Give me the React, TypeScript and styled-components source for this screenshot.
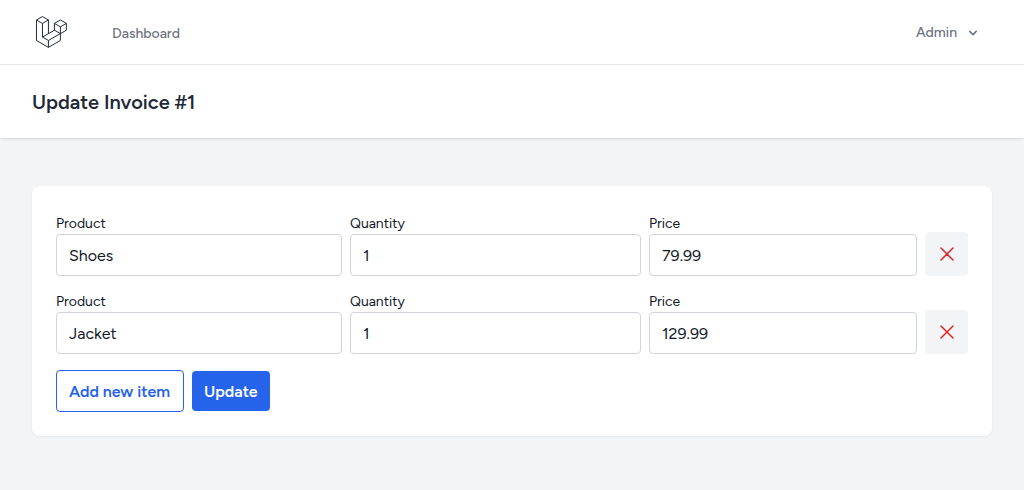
import React, { useState } from "react";
import styled, { createGlobalStyle, css } from "styled-components";

const GlobalStyle = createGlobalStyle`
  *, *::before, *::after { box-sizing: border-box; }
  body {
    margin: 0;
    background: #f3f4f6;
    color: #111827;
    font-family: Figtree, Inter, "Liberation Sans", sans-serif;
    font-size: 16px;
    line-height: 24px;
    -webkit-font-smoothing: antialiased;
  }
  button, input { font: inherit; color: inherit; }
`;

const Page = styled.div`
  min-height: 100vh;
  background: #f3f4f6;
`;

const Nav = styled.nav`
  background: #fff;
  border-bottom: 1px solid #e9ebee;
`;

const Container = styled.div`
  max-width: 1280px;
  margin: 0 auto;
  padding: 0 32px;
`;

const NavInner = styled(Container)`
  display: flex;
  align-items: center;
  height: 64px;
`;

const LogoLink = styled.a`
  display: flex;
  color: #1f2937;
`;

const NavLink = styled.a`
  margin-left: 44px;
  padding-top: 4px;
  font-size: 14px;
  line-height: 20px;
  font-weight: 500;
  color: #6b7280;
  text-decoration: none;
`;

const UserButton = styled.button`
  display: flex;
  align-items: center;
  gap: 8px;
  margin-left: auto;
  padding: 9px 11px 8px;
  border: 0;
  background: #fff;
  font-size: 14px;
  line-height: 20px;
  font-weight: 500;
  color: #6b7280;
  cursor: pointer;
`;

const UserName = styled.span`
  padding-top: 1px;
`;

const Header = styled.header`
  position: relative;
  background: #fff;
  box-shadow: 0 1px 3px 0 rgb(0 0 0 / 0.1), 0 1px 2px -1px rgb(0 0 0 / 0.1);
`;

const Title = styled.h2`
  margin: 0;
  padding: 25px 0 23px;
  font-size: 20px;
  line-height: 25px;
  font-weight: 600;
  color: #1f2937;
`;

const Main = styled.main`
  padding: 48px 0;
`;

const Card = styled.form`
  padding: 24px;
  background: #fff;
  border-radius: 8px;
  box-shadow: 0 1px 2px 0 rgb(0 0 0 / 0.05);
`;

const ItemRow = styled.div`
  display: grid;
  grid-template-columns: 286fr 291fr 268fr 43px;
  align-items: end;
  gap: 8px;
  margin-bottom: 12px;
`;

const Field = styled.div`
  display: flex;
  flex-direction: column;
  min-width: 0;
`;

const Label = styled.label`
  padding-top: 4px;
  font-size: 14px;
  line-height: 20px;
`;

const Input = styled.input`
  width: 100%;
  height: 42px;
  padding: 8px 12px;
  border: 1px solid #d1d5db;
  border-radius: 4px;
  background: #fff;
`;

const RemoveButton = styled.button`
  display: flex;
  align-items: center;
  justify-content: center;
  height: 44px;
  padding: 0;
  border: 0;
  border-radius: 4px;
  background: #f3f4f6;
  color: #dc2626;
  cursor: pointer;
`;

const Actions = styled.div`
  display: flex;
  align-items: center;
  gap: 8px;
  padding-top: 4px;
`;

const Button = styled.button<{ $outline?: boolean }>`
  padding: 9px 12px 7px;
  border: 0;
  border-radius: 4px;
  background: #2563eb;
  color: #fff;
  font-weight: 600;
  white-space: nowrap;
  cursor: pointer;
  ${({ $outline }) =>
    $outline &&
    css`
      min-width: 128px;
      border: 1px solid #2563eb;
      background: #fff;
      color: #2563eb;
      text-align: left;
    `}
`;

const Logo = () => (
  <svg width="36" height="36" viewBox="0 0 316 316" fill="none" stroke="currentColor" strokeWidth="8.7" strokeLinejoin="round" aria-hidden="true">
    <path d="M91.8 22.4 144.2 52.6 91.8 82.8 39.3 52.6Z" />
    <path d="M39.3 52.6V232.5L144.2 292.9 249.1 232.5V112.4" />
    <path d="M91.8 82.8V202.5L144.2 232.3V292.9" />
    <path d="M144.2 52.6V172.3M91.8 202.5 196.7 142.2 249.1 172.3" />
    <path d="M144.2 232.3 301.5 142.2V82.3" />
    <path d="M249.1 52.1 301.5 82.3 249.1 112.4 196.7 82.3Z" />
    <path d="M196.7 82.3V142.2" />
  </svg>
);

const Chevron = () => (
  <svg width="16" height="16" viewBox="0 0 20 20" fill="currentColor" aria-hidden="true">
    <path
      fillRule="evenodd"
      clipRule="evenodd"
      d="M5.293 7.293a1 1 0 011.414 0L10 10.586l3.293-3.293a1 1 0 111.414 1.414l-4 4a1 1 0 01-1.414 0l-4-4a1 1 0 010-1.414z"
    />
  </svg>
);

const Cross = () => (
  <svg width="24" height="24" viewBox="0 0 24 24" fill="none" stroke="currentColor" strokeWidth="1.5" strokeLinecap="round" strokeLinejoin="round" aria-hidden="true">
    <path d="M6 18 18 6M6 6l12 12" />
  </svg>
);

type Item = { id: number; product: string; quantity: string; price: string };

const columns = [
  { key: "product", label: "Product" },
  { key: "quantity", label: "Quantity" },
  { key: "price", label: "Price" },
] as const;

export default function App() {
  const [items, setItems] = useState<Item[]>([
    { id: 1, product: "Shoes", quantity: "1", price: "79.99" },
    { id: 2, product: "Jacket", quantity: "1", price: "129.99" },
  ]);

  const change = (id: number, key: string, value: string) =>
    setItems(items.map((item) => (item.id === id ? { ...item, [key]: value } : item)));
  const remove = (id: number) => setItems(items.filter((item) => item.id !== id));
  const add = () =>
    setItems([...items, { id: Math.max(0, ...items.map((i) => i.id)) + 1, product: "", quantity: "", price: "" }]);

  return (
    <Page>
      <GlobalStyle />
      <Nav>
        <NavInner>
          <LogoLink href="#" aria-label="Home">
            <Logo />
          </LogoLink>
          <NavLink href="#">Dashboard</NavLink>
          <UserButton type="button">
            <UserName>Admin</UserName>
            <Chevron />
          </UserButton>
        </NavInner>
      </Nav>
      <Header>
        <Container>
          <Title>Update Invoice #1</Title>
        </Container>
      </Header>
      <Main>
        <Container>
          <Card onSubmit={(event) => event.preventDefault()}>
            {items.map((item) => (
              <ItemRow key={item.id}>
                {columns.map(({ key, label }) => (
                  <Field key={key}>
                    <Label htmlFor={`${key}-${item.id}`}>{label}</Label>
                    <Input
                      id={`${key}-${item.id}`}
                      value={item[key]}
                      onChange={(event) => change(item.id, key, event.target.value)}
                    />
                  </Field>
                ))}
                <RemoveButton type="button" aria-label="Remove item" onClick={() => remove(item.id)}>
                  <Cross />
                </RemoveButton>
              </ItemRow>
            ))}
            <Actions>
              <Button type="button" $outline onClick={add}>
                Add new item
              </Button>
              <Button type="submit">Update</Button>
            </Actions>
          </Card>
        </Container>
      </Main>
    </Page>
  );
}
